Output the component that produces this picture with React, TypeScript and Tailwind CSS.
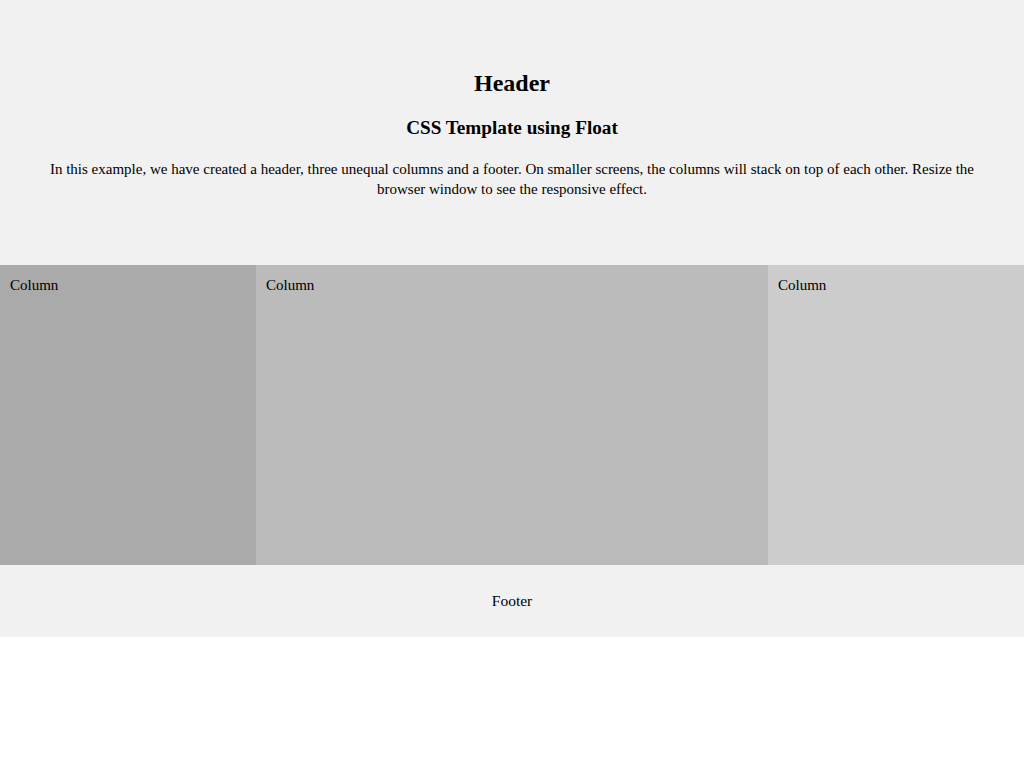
export default function App() {
  return (
    <div className="font-['Liberation_Serif',serif] text-[16px] text-black">
      {/* Header */}
      <div className="bg-[#f1f1f1] px-[44px] py-[50px] text-center">
        <h2 className="mt-[19px] mb-[20px] text-[24px] font-bold leading-[28px]">Header</h2>
        <h3 className="my-[19px] text-[19.2px] font-bold leading-[22px]">
          CSS Template using Float
        </h3>
        <p className="mt-[20px] mb-[16px] text-[15px] leading-[20px]">
          In this example, we have created a header, three unequal columns and a footer. On
          smaller screens, the columns will stack on top of each other. Resize the browser window
          to see the responsive effect.
        </p>
      </div>

      {/* Columns */}
      <div className="flex">
        <div className="h-[300px] w-1/4 bg-[#aaaaaa] p-[10px] text-[15px] leading-[20px]">Column</div>
        <div className="h-[300px] w-1/2 bg-[#bbbbbb] p-[10px] text-[15px] leading-[20px]">Column</div>
        <div className="h-[300px] w-1/4 bg-[#cccccc] p-[10px] text-[15px] leading-[20px]">Column</div>
      </div>

      {/* Footer */}
      <div className="bg-[#f1f1f1] p-[10px] text-center">
        <p className="my-[16px] text-[15.5px] leading-[20px]">Footer</p>
      </div>
    </div>
  )
}
